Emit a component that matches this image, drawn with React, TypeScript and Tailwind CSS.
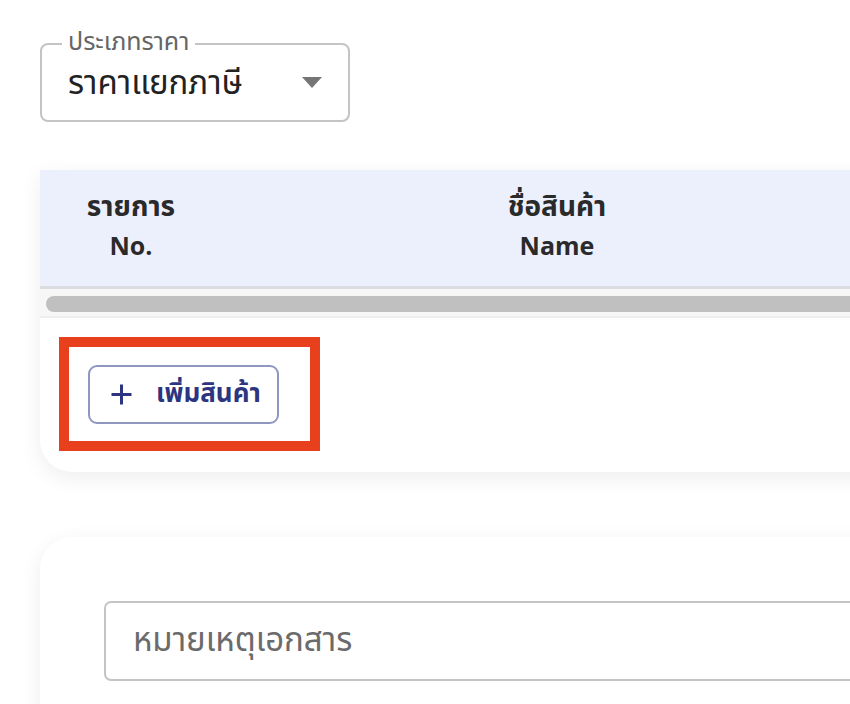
const font = { fontFamily: '"Noto Sans Thai", "Noto Sans", "Liberation Sans", sans-serif' };

function PriceTypeSelect() {
  return (
    <div className="relative w-[310px] h-[79px] rounded-[8px] border-2 border-[#c4c4c4] flex items-center pl-[26px] pr-[26px]">
      <span className="absolute left-[20px] top-[-20px] bg-white px-[6px] text-[25px] leading-[34px] text-[#666666]">
        ประเภทราคา
      </span>
      <span className="flex-1 text-[33px] leading-[42px] text-[#222222] mt-[2px]">ราคาแยกภาษี</span>
      <svg width="20" height="11" viewBox="0 0 20 11">
        <path d="M0 0 L20 0 L10 11 Z" fill="#757575" />
      </svg>
    </div>
  );
}

function ItemsTable() {
  return (
    <div className="w-[1100px] bg-white rounded-bl-[32px] shadow-[0_6px_22px_rgba(0,0,0,0.07)] overflow-hidden">
      <div className="flex h-[119px] bg-[#ecf0fd] border-b-[3px] border-[#dcdde2] font-bold text-[#2a2a2a]">
        <div className="w-[182px] flex flex-col items-center pt-[20px] gap-[4px]">
          <span className="text-[28px] leading-[36px]">รายการ</span>
          <span className="text-[25px] leading-[34px]">No.</span>
        </div>
        <div className="w-[670px] flex flex-col items-center pt-[20px] gap-[4px]">
          <span className="text-[28px] leading-[36px]">ชื่อสินค้า</span>
          <span className="text-[25px] leading-[34px]">Name</span>
        </div>
      </div>
      <div className="h-[29px] bg-[#f7f7f7] border-b-2 border-[#eeeeee] pl-[6px] pt-[7px]">
        <div className="h-[16px] w-[1000px] rounded-full bg-[#c0c0c0]" />
      </div>
      <div className="pt-[19px] pb-[21px] pl-[19px]">
        <div className="w-[261px] h-[114px] border-[10px] border-[#e8401c] flex items-center pl-[19px]">
          <button className="w-[191px] h-[59px] rounded-[9px] border-2 border-[#8f97c0] flex items-center pl-[20px] gap-[23px] text-[#2d3580]">
            <svg width="23" height="23" viewBox="0 0 23 23" className="shrink-0">
              <path d="M11.5 1.5 V21.5 M1.5 11.5 H21.5" stroke="currentColor" strokeWidth="3" />
            </svg>
            <span className="font-bold text-[26px] leading-[34px]">เพิ่มสินค้า</span>
          </button>
        </div>
      </div>
    </div>
  );
}

function NoteCard() {
  return (
    <div className="w-[1100px] h-[300px] bg-white rounded-tl-[32px] shadow-[0_6px_22px_rgba(0,0,0,0.07)] pt-[64px] pl-[64px]">
      <div className="w-[900px] h-[80px] rounded-[7px] border-2 border-[#c4c4c4] flex items-center pl-[27px]">
        <span className="text-[33px] leading-[42px] text-[#6b6b6b]">หมายเหตุเอกสาร</span>
      </div>
    </div>
  );
}

export default function App() {
  return (
    <div className="w-[850px] h-[704px] overflow-hidden bg-white" style={font}>
      <div className="pl-[40px] pt-[43px] flex flex-col">
        <PriceTypeSelect />
        <div className="mt-[48px]">
          <ItemsTable />
        </div>
        <div className="mt-[65px]">
          <NoteCard />
        </div>
      </div>
    </div>
  );
}
